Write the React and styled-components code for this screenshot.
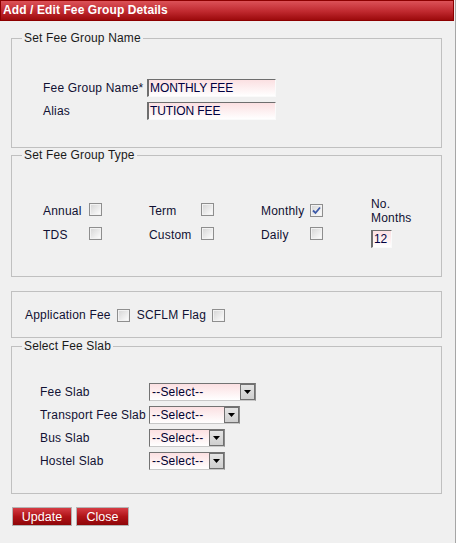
import React from "react";
import styled, { createGlobalStyle } from "styled-components";

const Global = createGlobalStyle`
  html, body { margin: 0; padding: 0; background: #f0f0f0; }
  body { font-family: "Liberation Sans", Arial, sans-serif; font-size: 12px; color: #111133; }
`;

const Page = styled.div`
  width: 455px;
  min-height: 543px;
  border-right: 1px solid #a6a6a6;
  background: #f0f0f0;
  box-sizing: content-box;
`;

const Header = styled.div`
  width: 454px;
  height: 21px;
  box-sizing: border-box;
  border: 1px solid #8c0000;
  background: linear-gradient(#dc5258, #c0292f 55%, #9c0a0c);
  color: #fff;
  font-weight: bold;
  font-size: 12px;
  letter-spacing: 0.1px;
  line-height: 18px;
  padding-left: 2px;
`;

const Fieldset = styled.fieldset`
  margin: ${(p) => p.$mt || 0}px 0 0 11px;
  padding: 0;
  width: 431px;
  box-sizing: border-box;
  border: 1px solid #c0c0c0;
  min-inline-size: 0;
`;

const Legend = styled.legend`
  margin-left: 10px;
  padding: 0 2px;
  font-size: 12px;
  line-height: 14px;
  letter-spacing: 0.15px;
  color: #1a1a1a;
`;

const NameGrid = styled.div`
  display: grid;
  grid-template-columns: 104px auto;
  grid-auto-rows: 18px;
  row-gap: 5px;
  align-items: center;
  padding: 34px 0 27px 31px;
`;

const Label = styled.span`
  color: #111133;
  white-space: nowrap;
  line-height: 14px;
  letter-spacing: 0.2px;
`;

const TextInput = styled.div`
  width: ${(p) => p.$w}px;
  height: 18px;
  box-sizing: border-box;
  border-top: 1px solid #6e6e6e;
  border-left: 2px solid #6e6e6e;
  border-right: 1px solid #fafafa;
  border-bottom: 1px solid #fafafa;
  background: linear-gradient(#fbe0e2, #fff);
  color: #000040;
  padding-left: 1px;
  line-height: 16px;
  font-size: 12px;
  letter-spacing: -0.1px;
`;

const TypeArea = styled.div`
  display: grid;
  grid-template-columns: 46px 60px 52px 60px 49px 61px auto;
  grid-template-rows: 24px 24px;
  align-items: center;
  padding: 37px 0 29px 31px;
`;

const MonthsCol = styled.div`
  grid-column: 7;
  grid-row: 1 / span 2;
  align-self: start;
  margin-top: -2px;
  display: flex;
  flex-direction: column;
  line-height: 14px;
  letter-spacing: 0.2px;
  color: #111133;
`;

const SmallInput = styled(TextInput)`
  margin-top: 5px;
`;

const Box = styled.span`
  display: inline-flex;
  align-items: center;
  justify-content: center;
  width: 13px;
  height: 13px;
  box-sizing: border-box;
  border: 1px solid #8e8e8e;
  background: linear-gradient(135deg, #d4d4d4, #f6f6f6 80%, #fff);
  box-shadow: inset 0 0 0 1px #f2f2f2;
  flex: none;
`;

const Check = ({ checked }) => (
  <Box>
    {checked && (
      <svg width="9" height="9" viewBox="0 0 9 9">
        <path d="M1 4.5 L3.5 7 L8 1.5" fill="none" stroke="#3d5aa8" strokeWidth="1.8" />
      </svg>
    )}
  </Box>
);

const FlagRow = styled.div`
  display: flex;
  align-items: center;
  height: 16px;
  padding: 15px 0 14px 13px;
  gap: 6px;
`;

const FlagLabel = styled(Label)`
  margin-left: ${(p) => p.$ml || 0}px;
`;

const SlabGrid = styled.div`
  display: grid;
  grid-template-columns: 109px auto;
  grid-auto-rows: 18px;
  row-gap: 5px;
  align-items: center;
  padding: 30px 0 23px 28px;
`;

const Select = styled.div`
  width: ${(p) => p.$w}px;
  height: 18px;
  box-sizing: border-box;
  display: flex;
  border-top: 1px solid #737373;
  border-left: 1px solid #737373;
  border-right: 1px solid #8a8a8a;
  border-bottom: 1px solid #c8c8c8;
  background: linear-gradient(#fbe0e2, #fff);
`;

const SelectText = styled.span`
  flex: 1;
  padding-left: 2px;
  line-height: 16px;
  letter-spacing: 0.2px;
  color: #000030;
`;

const SelectBtn = styled.span`
  width: 15px;
  height: 16px;
  box-sizing: border-box;
  border: 1px solid #707070;
  background: linear-gradient(#e4e4e4, #cfcfcf);
  display: flex;
  align-items: center;
  justify-content: center;
`;

const Arrow = () => (
  <svg width="7" height="4" viewBox="0 0 7 4">
    <path d="M0 0 H7 L3.5 4 Z" fill="#000" />
  </svg>
);

const Buttons = styled.div`
  display: flex;
  gap: 4px;
  margin: 13px 0 0 12px;
`;

const Button = styled.button`
  width: ${(p) => p.$w}px;
  height: 19px;
  box-sizing: border-box;
  border: 1px solid #b4b4b4;
  background: linear-gradient(#d63c44, #b01418 50%, #8e0508);
  color: #fff;
  font-family: "Liberation Sans", Arial, sans-serif;
  font-size: 12.5px;
  padding: 0;
  line-height: 16px;
`;

const CheckGrid = ({ items }) =>
  items.map(([label, checked], i) => (
    <React.Fragment key={i}>
      <Label>{label}</Label>
      <span>
        <Check checked={checked} />
      </span>
    </React.Fragment>
  ));

export default function App() {
  return (
    <Page>
      <Global />
      <Header>Add / Edit Fee Group Details</Header>

      <Fieldset $mt={10}>
        <Legend>Set Fee Group Name</Legend>
        <NameGrid>
          <Label>Fee Group Name*</Label>
          <TextInput $w={129}>MONTHLY FEE</TextInput>
          <Label>Alias</Label>
          <TextInput $w={129}>TUTION FEE</TextInput>
        </NameGrid>
      </Fieldset>

      <Fieldset $mt={0}>
        <Legend>Set Fee Group Type</Legend>
        <TypeArea>
          <CheckGrid
            items={[
              ["Annual", false],
              ["Term", false],
              ["Monthly", true],
            ]}
          />
          <CheckGrid
            items={[
              ["TDS", false],
              ["Custom", false],
              ["Daily", false],
            ]}
          />
          <MonthsCol>
            <span>No.</span>
            <span>Months</span>
            <SmallInput $w={21}>12</SmallInput>
          </MonthsCol>
        </TypeArea>
      </Fieldset>

      <Fieldset $mt={14}>
        <FlagRow>
          <FlagLabel>Application Fee</FlagLabel>
          <Check />
          <FlagLabel $ml={1}>SCFLM Flag</FlagLabel>
          <Check />
        </FlagRow>
      </Fieldset>

      <Fieldset $mt={1}>
        <Legend>Select Fee Slab</Legend>
        <SlabGrid>
          {[
            ["Fee Slab", 107],
            ["Transport Fee Slab", 91],
            ["Bus Slab", 76],
            ["Hostel Slab", 76],
          ].map(([l, w]) => (
            <React.Fragment key={l}>
              <Label>{l}</Label>
              <Select $w={w}>
                <SelectText>--Select--</SelectText>
                <SelectBtn>
                  <Arrow />
                </SelectBtn>
              </Select>
            </React.Fragment>
          ))}
        </SlabGrid>
      </Fieldset>

      <Buttons>
        <Button $w={60}>Update</Button>
        <Button $w={53}>Close</Button>
      </Buttons>
    </Page>
  );
}
